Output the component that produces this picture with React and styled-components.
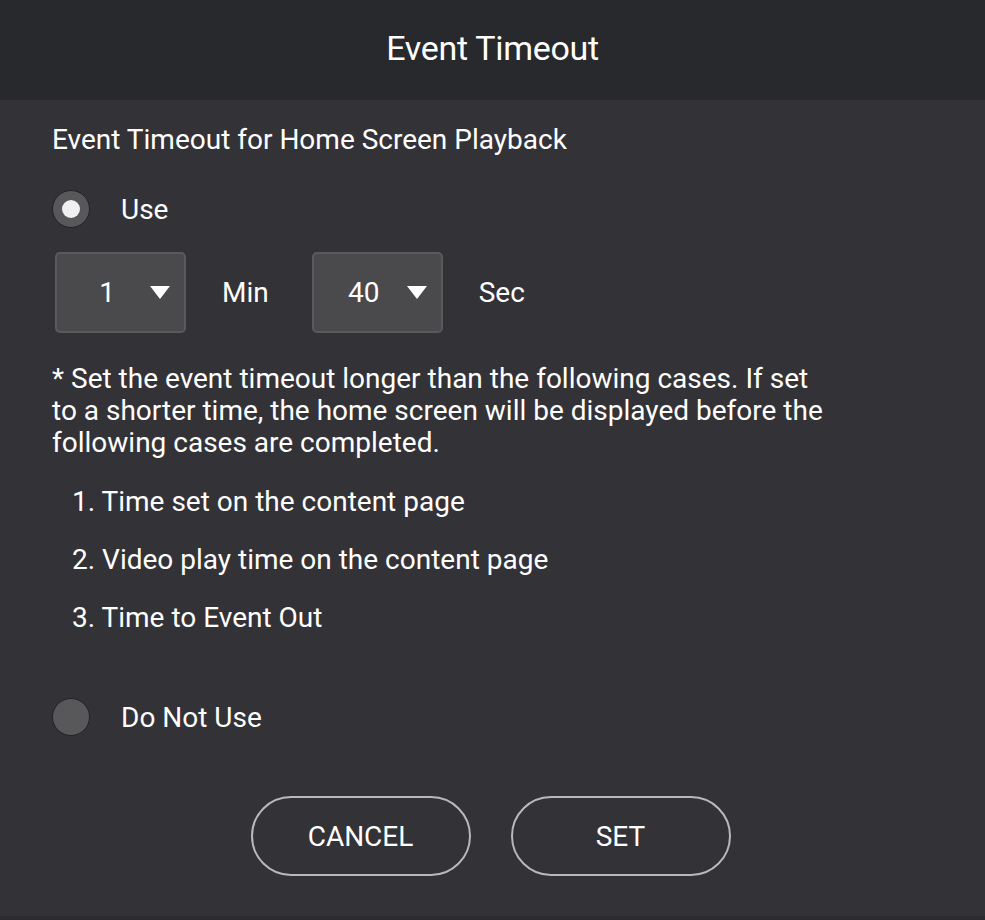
import React, { useState } from "react";
import styled, { createGlobalStyle } from "styled-components";

const GlobalStyle = createGlobalStyle`
  html, body {
    margin: 0;
    padding: 0;
    background: #333237;
  }
  body {
    font-family: Roboto, "Noto Sans", sans-serif;
    color: #ffffff;
  }
`;

const Dialog = styled.div`
  width: 985px;
  height: 920px;
  background: #333237;
  display: flex;
  flex-direction: column;
  border-bottom: 4px solid #2c2c30;
  box-sizing: border-box;
`;

const Header = styled.div`
  height: 100px;
  background: #28292c;
  display: flex;
  align-items: center;
  justify-content: center;
  padding-bottom: 4px;
  box-sizing: border-box;
`;

const Title = styled.h1`
  margin: 0;
  font-size: 34px;
  font-weight: 400;
  letter-spacing: -0.3px;
`;

const Body = styled.div`
  padding: 20px 52px 0;
  display: flex;
  flex-direction: column;
`;

const Label = styled.div`
  font-size: 28px;
  line-height: 40px;
`;

const RadioRow = styled.label`
  display: flex;
  align-items: center;
  gap: 31px;
  height: 46px;
  font-size: 28px;
  cursor: pointer;
  margin-top: ${(p) => p.$top || 0}px;
`;

const RadioCircle = styled.span`
  width: 38px;
  height: 38px;
  border-radius: 50%;
  background: #58585a;
  border: 1px solid #232326;
  box-sizing: border-box;
  display: flex;
  align-items: center;
  justify-content: center;

  &::after {
    content: "";
    width: 18px;
    height: 18px;
    border-radius: 50%;
    background: #f0f0f0;
    display: ${(p) => (p.$checked ? "block" : "none")};
  }
`;

const TimeRow = styled.div`
  display: flex;
  align-items: center;
  margin-top: 20px;
  margin-left: 3px;
`;

const Select = styled.div`
  width: 131px;
  height: 81px;
  box-sizing: border-box;
  background: #4a4a4c;
  border: 2px solid #5a5a5c;
  border-radius: 5px;
  display: grid;
  grid-template-columns: 56px 20px;
  column-gap: 15px;
  align-items: center;
  padding-left: 22px;
  font-size: 28px;
  cursor: pointer;
`;

const Value = styled.span`
  text-align: center;
`;

const Arrow = styled.span`
  width: 0;
  height: 0;
  border-left: 10px solid transparent;
  border-right: 10px solid transparent;
  border-top: 13px solid #ffffff;
`;

const Unit = styled.span`
  font-size: 28px;
  margin: 0 43px 0 36px;
`;

const Note = styled.p`
  margin: 30px 0 0;
  font-size: 28px;
  line-height: 32px;
  max-width: 778px;
`;

const CaseList = styled.ol`
  list-style: none;
  margin: 14px 0 0;
  padding: 0 0 0 20px;
`;

const CaseItem = styled.li`
  font-size: 28px;
  line-height: 58px;
`;

const Buttons = styled.div`
  display: flex;
  justify-content: center;
  gap: 40px;
  margin: 56px -52px 0;
  padding-right: 4px;
`;

const Button = styled.button`
  width: 220px;
  height: 80px;
  border-radius: 40px;
  border: 2px solid #b9b9bb;
  background: transparent;
  color: #ffffff;
  font-family: Roboto, sans-serif;
  font-size: 28px;
  cursor: pointer;
`;

const App = () => {
  const [use, setUse] = useState(true);
  return (
    <>
      <GlobalStyle />
      <Dialog>
        <Header>
          <Title>Event Timeout</Title>
        </Header>
        <Body>
          <Label>Event Timeout for Home Screen Playback</Label>
          <RadioRow $top={26} onClick={() => setUse(true)}>
            <RadioCircle $checked={use} />
            Use
          </RadioRow>
          <TimeRow>
            <Select>
              <Value>1</Value>
              <Arrow />
            </Select>
            <Unit>Min</Unit>
            <Select>
              <Value>40</Value>
              <Arrow />
            </Select>
            <Unit>Sec</Unit>
          </TimeRow>
          <Note>
            * Set the event timeout longer than the following cases. If set
            to a shorter time, the home screen will be displayed before the
            following cases are completed.
          </Note>
          <CaseList>
            <CaseItem>1. Time set on the content page</CaseItem>
            <CaseItem>2. Video play time on the content page</CaseItem>
            <CaseItem>3. Time to Event Out</CaseItem>
          </CaseList>
          <RadioRow $top={47} onClick={() => setUse(false)}>
            <RadioCircle $checked={!use} />
            Do Not Use
          </RadioRow>
          <Buttons>
            <Button>CANCEL</Button>
            <Button>SET</Button>
          </Buttons>
        </Body>
      </Dialog>
    </>
  );
};

export default App;
